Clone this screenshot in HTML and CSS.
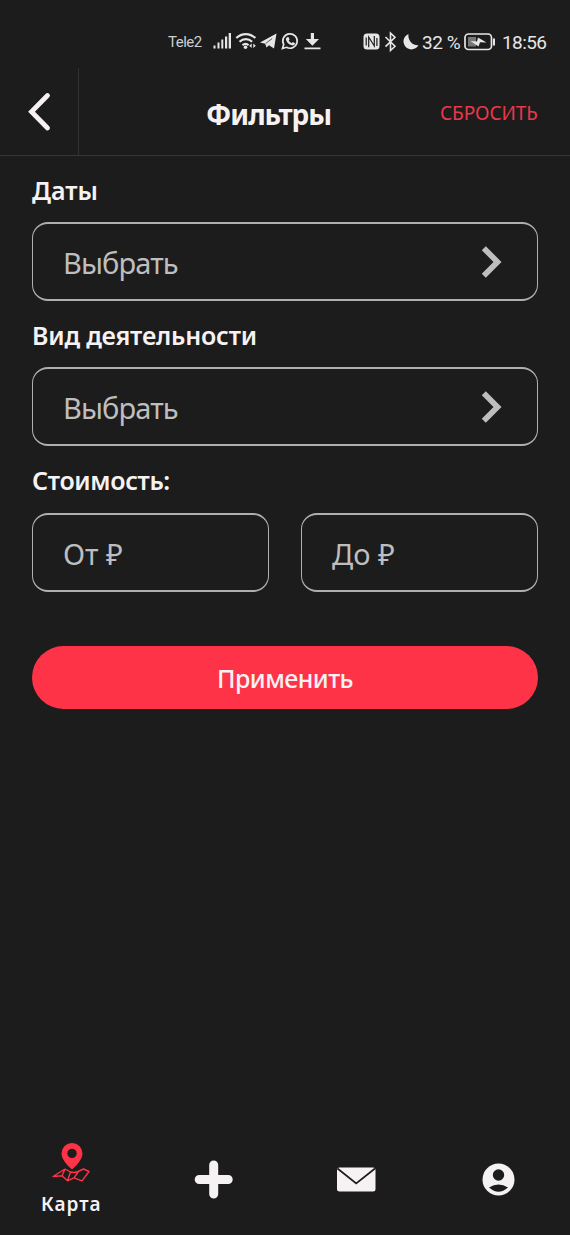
FILE: index.html
```html
<!DOCTYPE html>
<html lang="ru">
<head>
<meta charset="utf-8">
<title>Фильтры</title>
<link rel="stylesheet" href="styles.css">
</head>
<body>
<div class="screen">
  <div class="status">
    <span class="carrier">Tele2</span>
    <svg class="status-left" width="110" height="24" viewBox="0 0 110 24" fill="#e6e6e6">
      <path d="M.5 19.500h2v-3h-2zM4.500 19.500h2v-6h-2zM8.300 19.500h2v-9h-2zM12 19.500h2.200v-12H12zM15.700 19.500h2.300V4h-2.300z"/>
      <g fill="none" stroke="#e6e6e6" stroke-width="2.200"><path d="M23.300 9c5.500-5.300 13.500-5.300 19 0M26.500 12.800c3.800-3.500 9-3.500 12.600 0M29.500 16.200c2-1.700 4.300-1.700 6 0"/></g>
      <circle cx="32.500" cy="18.200" r="1.800"/><path d="M38.700 14.500l-2.500 2.300 2.500 2.300zM40.300 14.500v4.600l2.500-2.300z"/>
      <path d="M47 13.500L63.500 4.500l-2.500 15-5-3.300-2.500 2.300-1.300-3.800z"/><path d="M52.700 14.500l6.500-5" stroke="#1c1c1c" stroke-width=".7"/>
      <path d="M69.500 19.500l1.200-4a7.200 7.200 0 1 1 2.800 2.800z" fill="none" stroke="#e6e6e6" stroke-width="1.700"/>
      <path d="M74 8.300l1.500-.4 1.100 2.500-.9 1.200c.7 1.300 1.600 2 2.900 2.600l1.200-1.100 2.200 1.200c0 1.800-1.700 2.500-3.200 2-3-.9-5.200-3.100-5.900-5.900-.1-.8.300-1.500 1.100-2.100z"/>
      <path d="M97.800 4h3.200v6h5l-6.600 6.700-6.600-6.700h5zM91.500 18.500h16v1.700h-16z"/>
    </svg>
    <svg class="status-mid" width="56" height="24" viewBox="0 0 56 24">
      <rect x=".5" y="3.500" width="16" height="16" rx="3.500" fill="#e6e6e6"/>
      <path d="M5.700 17.300V7l5.600 9V6M3.200 15.500V7.500M13.900 16V8" fill="none" stroke="#1c1c1c" stroke-width="1.200"/>
      <path d="M22.500 7l9.500 9.300-4.500 4.200V3l4.500 4.300-9.500 9.300" fill="none" stroke="#e6e6e6" stroke-width="1.600"/>
      <path d="M45.500 4a8 8 0 1 0 10 11.300C50 16 44.500 10.500 45.500 4z" fill="#e6e6e6"/>
    </svg>
    <span class="percent">32 %</span>
    <svg class="battery" width="32" height="24" viewBox="0 0 32 24">
      <rect x="1" y="4" width="26.500" height="15.500" rx="3.500" fill="none" stroke="#e6e6e6" stroke-width="1.700"/>
      <path d="M4 7h8v9.500H4z" fill="#777"/><path d="M30 8.500v7" stroke="#e6e6e6" stroke-width="2"/>
      <path d="M6.500 11l6.500.5L14 7.500l8.500 5-6.500-.2-1.500 4.200z" fill="#e6e6e6"/>
    </svg>
    <span class="time">18:56</span>
  </div>
  <header class="header">
    <div class="back"><svg width="24" height="40" viewBox="0 0 24 40"><path d="M20.500 3.500L4.500 19.700 20.500 36" fill="none" stroke="#f6f2f3" stroke-width="4.800" stroke-linecap="round"/></svg></div>
    <h1 class="title"><span class="title-text">Фильтры</span></h1>
    <div class="reset">СБРОСИТЬ</div>
  </header>
  <main class="form">
    <h2 class="label label-date">Даты</h2>
    <div class="field"><span class="choose">Выбрать</span><svg class="chevron" width="22" height="34" viewBox="0 0 22 34"><path d="M2.800 3.200L16.500 17 2.800 30.800" fill="none" stroke="#bfbebf" stroke-width="5.700"/></svg></div>
    <h2 class="label label-kind">Вид деятельности</h2>
    <div class="field"><span class="choose">Выбрать</span><svg class="chevron" width="22" height="34" viewBox="0 0 22 34"><path d="M2.800 3.200L16.500 17 2.800 30.800" fill="none" stroke="#bfbebf" stroke-width="5.700"/></svg></div>
    <h2 class="label label-cost">Стоимость:</h2>
    <div class="range">
      <div class="field"><span class="from">От ₽</span></div>
      <div class="field"><span class="to">До ₽</span></div>
    </div>
    <div class="apply"><span class="apply-text">Применить</span></div>
  </main>
  <nav class="nav">
    <div class="tab">
      <svg width="40" height="40" viewBox="0 0 40 40">
        <path d="M21 0a10.500 10.500 0 0 0-10.500 10.500C10.500 16 16 22 21 26.500c5-4.500 10.500-10.500 10.500-16A10.500 10.500 0 0 0 21 0zm0 5.700a4.700 4.700 0 1 1 0 9.400 4.700 4.700 0 0 1 0-9.400z" fill="#ff3347" fill-rule="evenodd"/>
        <path d="M14 26L2 33.500l9-.7 5.500 5 6.500-3 8 3 7-9.300-5.500-2.500-5.500 2.500M14 26l-3 6.800M14 26l5.500 3-3 8.800M19.500 29l4 .5 3.500-1M23 34.800l4.500-6.300M38 28.500L31 37.800" fill="none" stroke="#ff3347" stroke-width="1.400" stroke-linejoin="round"/>
      </svg>
      <span class="tab-text">Карта</span>
    </div>
    <div class="tab"><svg width="40" height="40" viewBox="0 0 40 40"><path d="M19.700 5v29M5.200 19.500h29" stroke="#f6f2f3" stroke-width="9" stroke-linecap="round"/></svg></div>
    <div class="tab"><svg width="40" height="40" viewBox="0 0 40 40"><rect x="1" y="7.500" width="38.500" height="24" rx="2.500" fill="#f6f2f3"/><path d="M1.500 8.500L20.200 23.500 39 8.500" fill="none" stroke="#1c1c1c" stroke-width="1.700"/></svg></div>
    <div class="tab"><svg width="40" height="40" viewBox="0 0 40 40"><circle cx="19.500" cy="19.500" r="16" fill="#f6f2f3"/><circle cx="19.500" cy="15" r="5.700" fill="#1c1c1c"/><path d="M10 27.500q9.500-6 19 0-9.500 8.500-19 0z" fill="#1c1c1c"/></svg></div>
  </nav>
</div>
</body>
</html>
```
FILE: styles.css
```css
* { box-sizing: border-box; }
body { margin: 0; background: #1c1c1c; color: #f6f2f3; font-family: "Noto Sans", sans-serif; }
.screen { width: 570px; height: 1235px; display: flex; flex-direction: column; background: #1c1c1c; overflow: hidden; }
.screen span, .reset { white-space: nowrap; }
.status { height: 68px; padding: 16px 23px 0 168px; display: flex; align-items: center; color: #e6e6e6; font-family: Roboto, sans-serif; }
.carrier { width: 45px; font-size: 15px; letter-spacing: -.5px; color: #cfcfcf; }
.status-left { margin-right: 40px; margin-top: -2px; flex: none; }
.status-mid { flex: none; margin-right: 3px; }
.percent { width: 42px; font-size: 19px; letter-spacing: -.4px; }
.battery { flex: none; margin-right: 6px; }
.time { font-size: 19px; letter-spacing: -.6px; }
.header { height: 88px; display: flex; align-items: stretch; border-bottom: 1px solid #363636; }
.back { width: 79px; border-right: 1px solid #303030; display: flex; align-items: center; justify-content: center; }
.title { margin: 0; width: 361px; padding: 4px 0 0 127px; display: flex; align-items: center; font-size: 28px; font-weight: 700; letter-spacing: -1px; }
.reset { width: 130px; padding-top: 2px; display: flex; align-items: center; color: #ec374a; font-size: 19px; font-weight: 400; letter-spacing: -.1px; }
.form { padding: 0 32px; }
.label { margin: 0; height: 66px; padding-top: 16px; font-size: 25px; line-height: 36px; font-weight: 600; white-space: nowrap; }
.label-kind { letter-spacing: -.2px; }
.label-cost { letter-spacing: -.35px; }
.field { flex: 1; height: 79px; border: solid #b0afb0; border-width: 2px 1px; border-radius: 16px; padding: 2px 34px 0 30px; display: flex; align-items: center; justify-content: space-between; color: #bfbebf; font-size: 29px; font-weight: 400; }
.choose { letter-spacing: -.9px; }
.from, .to { letter-spacing: 0; }
.form > .field + .label-cost { height: 67px; }
.chevron { margin-top: -2px; }
.range { display: flex; gap: 32px; }
.apply { margin-top: 53.500px; height: 63.500px; border-radius: 32px; background: #ff3347; display: flex; align-items: center; justify-content: center; padding-top: 1px; font-size: 25px; font-weight: 500; }
.apply-text { letter-spacing: -.55px; }
.nav { margin-top: auto; height: 111px; display: grid; grid-template-columns: repeat(4, 142.500px); }
.tab { padding-top: 36px; display: flex; flex-direction: column; align-items: center; }
.tab:first-child { padding-top: 19px; }
.tab-text { margin-top: 7px; font-size: 19px; line-height: 28px; font-weight: 600; letter-spacing: 1px; }
```
